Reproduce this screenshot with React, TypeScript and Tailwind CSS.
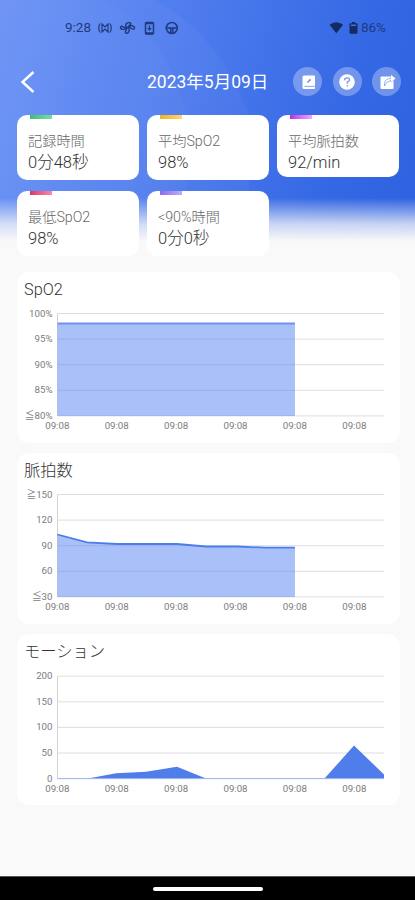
import { ReactNode } from "react";

const stats = [
  { label: "記録時間", value: "0分48秒", bar: "from-[#43bd77] to-[#7bdca3]", height: "h-[65px]" },
  { label: "平均SpO2", value: "98%", bar: "from-[#efb321] to-[#ffd768]", height: "h-[65px]" },
  { label: "平均脈拍数", value: "92/min", bar: "from-[#bb2be0] to-[#f3a5ff]", height: "h-[62px]" },
  { label: "最低SpO2", value: "98%", bar: "from-[#d93767] to-[#f58aab]", height: "h-[65px]" },
  { label: "<90%時間", value: "0分0秒", bar: "from-[#8d6ceb] to-[#c0acf8]", height: "h-[65px]" },
];

const LEFT = 40.5;
const RIGHT = 367;
const STEP = 25.6;
const TICK = 59.4;

type ChartProps = {
  title: string;
  top: number;
  labels: string[];
  area: string;
  line?: string;
  fill: string;
  stroke?: string;
  baseline?: boolean;
};

function ChartCard({ title, top, labels, area, line, fill, stroke, baseline }: ChartProps) {
  return (
    <section className="relative h-[171px] rounded-xl bg-white">
      <h2 className="absolute left-[7px] top-[6px] text-[16.3px] font-light leading-6 text-[#333]">{title}</h2>
      <svg width="383" height="171" viewBox="0 0 383 171" className="block">
        {/* grid lines stay faintly visible through the area */}
        {labels.map((label, i) => (
          <g key={label}>
            <path d={`M${LEFT} ${top + i * STEP}H${RIGHT}`} stroke="#dedede" strokeWidth="1" />
            <text x="35.5" y={top + i * STEP + 3} textAnchor="end" fontSize="9.7" fill="#7c7c7c">
              {label}
            </text>
          </g>
        ))}
        <path d={`M${LEFT} ${top}v${STEP * 4}`} stroke="#d2d2d2" />
        <path d={area} fill={fill} />
        {stroke && line && <path d={line} fill="none" stroke={stroke} strokeWidth="1.8" />}
        {baseline && <path d={`M${LEFT} ${top + STEP * 4}H${RIGHT}`} stroke="#9db5f5" />}
        {[0, 1, 2, 3, 4, 5].map((i) => (
          <text key={i} x={40.3 + i * TICK} y={top + 115.8} textAnchor="middle" fontSize="9.7" fill="#7c7c7c">
            09:08
          </text>
        ))}
      </svg>
    </section>
  );
}

function RoundButton({ children, label }: { children: ReactNode; label: string }) {
  return (
    <button aria-label={label} className="flex size-[29px] items-center justify-center rounded-full bg-white/30">
      <svg width="18" height="18" viewBox="0 0 18 18" fill="none">
        {children}
      </svg>
    </button>
  );
}

function StatusBar() {
  return (
    <div className="flex h-[55px] items-center pl-[65px] pr-[29px] text-[13.5px] text-[#203a80]">
      <span className="w-[32px]">9:28</span>
      <svg width="115" height="16" viewBox="0 0 115 16" fill="none" stroke="#203a80" strokeWidth="1.2">
        {/* winged badge */}
        <path d="M3 3.5Q.5 8 3 12.5M13 3.5Q15.500 8 13 12.5M5 4l3 3 3-3v8L8 9l-3 3z" />
        {/* fan */}
        <path d="M29.500 7.500C27.500 4 30 2 33 2.800c1.800.700.200 1.800-.800 2.700l-1 1.500c3-2 6.500-1.500 6.300 1.200-.700 2-2.500.500-3.500 0l-2.500-.700c1.500 3 .500 5.700-2.300 5.700-1.700-.500-.500-2 0-3l.800-2.200c-2.500 2-6.500 2-6.500-.800.500-2 2.300-.700 3.800.300z" strokeWidth="1.400" />
        {/* phone with download */}
        <rect x="48.500" y="2.500" width="8" height="11.500" rx="1" strokeWidth="1.500" />
        <path d="M48.500 3.200h8M48.500 13.300h8" strokeWidth="2" />
        <path d="M52.500 5.500v4.500M50.700 8.200l1.800 1.800 1.800-1.800" />
        {/* steering wheel */}
        <circle cx="74.800" cy="8" r="5.500" strokeWidth="1.600" />
        <path d="M69.500 8h10.600M73.800 8v5.200M75.800 8v5.200" strokeWidth="1.500" />
      </svg>
      <div className="ml-auto flex items-center">
        <svg width="32" height="16" viewBox="0 0 32 16" fill="#132a62">
          <path d="M.500 4.800Q7.300-.500 14.100 4.800L7.300 13.300z" />
          <path d="M23 2h3v1.200h1.500c.700 0 1 .400 1 1v8.500c0 .700-.400 1-1 1h-6c-.700 0-1-.400-1-1V4.200c0-.600.400-1 1-1H23z" />
          <path d="M22 4.500h5v1.500h-5z" fill="#4471e3" />
        </svg>
        <span>86%</span>
      </div>
    </div>
  );
}

export default function App() {
  return (
    <div className="relative flex h-[900px] w-[415px] flex-col overflow-hidden bg-[#f9f9f9] font-[Roboto,'Noto_Sans_CJK_JP',sans-serif]">
      {/* Blue backdrop fading into the page */}
      <div className="absolute inset-x-0 top-0 h-[256px] bg-[linear-gradient(105deg,#6890f6_0%,#4d7bee_42%,#3568e4_78%,#2d61df_100%)]">
        <svg width="415" height="256" fill="white">
          <path d="M0 0H103Q164 28 187 115V256H0z" opacity=".025" />
          <path d="M0 0H155Q220 35 249 115V256H0z" opacity=".035" />
        </svg>
        <div className="absolute inset-x-0 bottom-0 h-[58px] bg-linear-to-b from-[#f9f9f9]/0 via-[#f9f9f9]/75 via-45% to-[#f9f9f9] to-75%" />
      </div>

      <div className="relative flex flex-1 flex-col">
        <StatusBar />
        <header className="flex h-[53px] items-center pl-[20px] pr-[14px] text-white">
          <button aria-label="戻る" className="w-[28px]">
            <svg width="16" height="24" viewBox="0 0 16 24" fill="none" stroke="white" strokeWidth="2.400">
              <path d="M13.500 2L2.500 12l11 10" />
            </svg>
          </button>
          <h1 className="ml-[99px] whitespace-nowrap text-[17.500px] leading-6">2023年5月09日</h1>
          <div className="ml-auto flex gap-[10.5px]">
            <RoundButton label="ノート">
              <path d="M3.500 4q0-1.500 1.500-1.500H15q1 0 1 1V15q0 1-1 1H5q-1.500 0-1.500-1.500z" fill="white" />
              <path d="M5.500 13.400H16" stroke="#8ba6ee" strokeWidth="1" />
              <path d="M8 10l.400-1.600L11 5.800l1.200 1.200-2.600 2.600z" fill="#7393e9" />
            </RoundButton>
            <RoundButton label="ヘルプ">
              <circle cx="9" cy="9" r="7.800" fill="white" />
              <path d="M6.500 7.300Q6.700 4.800 9.100 4.800t2.400 2.200Q11.500 8.200 9.300 9v1.800M9.300 12.300v1.300" stroke="#7393e9" strokeWidth="1.300" />
            </RoundButton>
            <RoundButton label="共有">
              <path d="M2.500 4.500q0-1 1-1H14.500q1 0 1 1V15q0 1-1 1h-11q-1 0-1-1z" fill="white" />
              <path d="M6.500 13V10.300Q7 5.500 13 5.500V2L17.500 5.500 13 9V7.500Q9 7.800 6.500 13" fill="white" stroke="#7f9dec" strokeWidth=".800" />
              <path d="M13 5.500V2L17.500 5.500 13 9z" fill="white" />
            </RoundButton>
          </div>
        </header>

        <div className="grid grid-cols-3 items-start gap-x-2 gap-y-[11px] pl-[17px] pr-4 pt-[7px]">
          {stats.map((s) => (
            <div key={s.label} className={`${s.height} overflow-hidden rounded-[10px] bg-white pl-[11px]`}>
              <div className={`ml-[1.5px] h-[3.5px] w-[22px] bg-linear-to-r ${s.bar}`} />
              <p className="mt-[11px] whitespace-nowrap text-[14.200px] font-light leading-[22px] text-[#666]">{s.label}</p>
              <p className="whitespace-nowrap text-[16.500px] font-light leading-[22px] text-[#333]">{s.value}</p>
            </div>
          ))}
        </div>

        <main className="flex flex-col gap-[10px] pl-[17px] pr-[15px] pt-[16px]">
          <ChartCard
            title="SpO2"
            top={41.5}
            labels={["100%", "95%", "90%", "85%", "≦80%"]}
            area="M40.500 51.500H278V143.900H40.500z"
            line="M40.500 51.500H278"
            fill="rgba(83,129,242,.5)"
            stroke="#6f94f3"
          />
          <ChartCard
            title="脈拍数"
            top={41.5}
            labels={["≧150", "120", "90", "60", "≦30"]}
            area="M40.500 81.500L70 89.300 100 91H160L189 93.500H220L249 94.700H278V143.900H40.500z"
            line="M40.500 81.500L70 89.300 100 91H160L189 93.500H220L249 94.700H278"
            fill="rgba(83,129,242,.5)"
            stroke="#4a7eeb"
          />
          <ChartCard
            title="モーション"
            top={42.2}
            labels={["200", "150", "100", "50", "0"]}
            area="M71 144.600L99 139.200 129 137.800 160 132.800 189 144.600zM307.500 144.600L337 111.500 367 140.500V144.600z"
            fill="#4f7eea"
            baseline
          />
        </main>
      </div>

      <footer className="relative flex h-6 justify-center border-t border-[#555] bg-black pt-[10px]">
        <div className="h-[4px] w-[110px] rounded-full bg-white" />
      </footer>
    </div>
  );
}
